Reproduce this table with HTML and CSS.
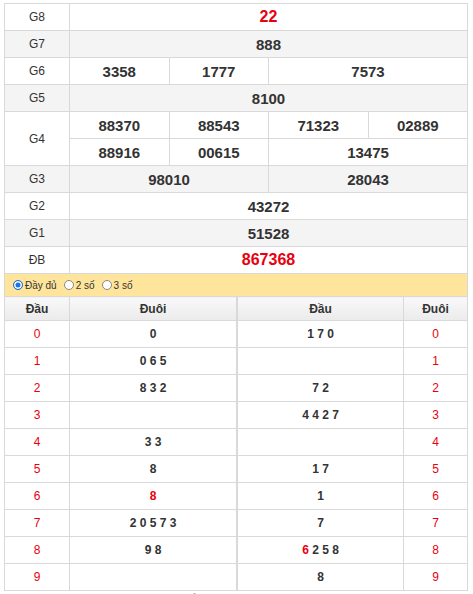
FILE: index.html
```html
<!DOCTYPE html>
<html lang="vi">
<head>
<meta charset="utf-8">
<link rel="stylesheet" href="styles.css">
</head>
<body>
<div class="wrap">
<table class="kq">
  <colgroup><col class="c-label"><col><col><col><col></colgroup>
  <tr><td class="lbl">G8</td><td colspan="4" class="num red">22</td></tr>
  <tr class="alt"><td class="lbl">G7</td><td colspan="4" class="num">888</td></tr>
  <tr><td class="lbl">G6</td><td class="num">3358</td><td class="num">1777</td><td colspan="2" class="num">7573</td></tr>
  <tr class="alt"><td class="lbl">G5</td><td colspan="4" class="num">8100</td></tr>
  <tr><td class="lbl" rowspan="2">G4</td><td class="num">88370</td><td class="num">88543</td><td class="num">71323</td><td class="num">02889</td></tr>
  <tr><td class="num">88916</td><td class="num">00615</td><td colspan="2" class="num">13475</td></tr>
  <tr class="alt"><td class="lbl">G3</td><td colspan="2" class="num">98010</td><td colspan="2" class="num">28043</td></tr>
  <tr><td class="lbl">G2</td><td colspan="4" class="num">43272</td></tr>
  <tr class="alt"><td class="lbl">G1</td><td colspan="4" class="num">51528</td></tr>
  <tr><td class="lbl">ĐB</td><td colspan="4" class="num red">867368</td></tr>
</table>
<div class="opts">
  <label class="opt"><span class="radio on"></span>Đầy đủ</label>
  <label class="opt"><span class="radio"></span>2 số</label>
  <label class="opt"><span class="radio"></span>3 số</label>
</div>
<div class="loto">
  <table class="lt left">
    <colgroup><col class="c-dau"><col></colgroup>
    <tr class="hd"><th>Đầu</th><th>Đuôi</th></tr>
    <tr><td class="r">0</td><td>0</td></tr>
    <tr><td class="r">1</td><td>0 6 5</td></tr>
    <tr><td class="r">2</td><td>8 3 2</td></tr>
    <tr><td class="r">3</td><td></td></tr>
    <tr><td class="r">4</td><td>3 3</td></tr>
    <tr><td class="r">5</td><td>8</td></tr>
    <tr><td class="r">6</td><td><span class="rb">8</span></td></tr>
    <tr><td class="r">7</td><td>2 0 5 7 3</td></tr>
    <tr><td class="r">8</td><td>9 8</td></tr>
    <tr><td class="r">9</td><td></td></tr>
  </table>
  <table class="lt right">
    <colgroup><col><col class="c-duoi"></colgroup>
    <tr class="hd"><th>Đầu</th><th>Đuôi</th></tr>
    <tr><td>1 7 0</td><td class="r">0</td></tr>
    <tr><td></td><td class="r">1</td></tr>
    <tr><td>7 2</td><td class="r">2</td></tr>
    <tr><td>4 4 2 7</td><td class="r">3</td></tr>
    <tr><td></td><td class="r">4</td></tr>
    <tr><td>1 7</td><td class="r">5</td></tr>
    <tr><td>1</td><td class="r">6</td></tr>
    <tr><td>7</td><td class="r">7</td></tr>
    <tr><td><span class="rb">6</span> 2 5 8</td><td class="r">8</td></tr>
    <tr><td>8</td><td class="r">9</td></tr>
  </table>
</div>
<p class="more">Xem thêm kết quả xổ số miền Bắc hôm nay, thống kê lô tô, cầu lô đẹp nhất</p>
</div>
</body>
</html>
```
FILE: styles.css
```css
html, body {
  margin: 0;
  padding: 0;
  background: #fff;
  font-family: "Liberation Sans", Arial, sans-serif;
  color: #333;
}
.wrap {
  padding: 3px 0 0 4px;
  width: 463px;
}
table {
  border-collapse: collapse;
  table-layout: fixed;
}
.kq {
  width: 464px;
}
.kq .c-label { width: 65px; }
.kq td {
  border: 1px solid #d9d9d9;
  height: 26px;
  padding: 0;
  text-align: center;
  vertical-align: middle;
}
.kq tr.alt td { background: #f4f4f4; }
.lbl {
  font-size: 12px;
  color: #333;
}
.num {
  font-size: 15px;
  font-weight: bold;
  color: #333;
}
.num.red { color: #e8000f; font-size: 16px; }
.opts {
  height: 22px;
  background: #fee59b;
  border-left: 1px solid #d9d9d9;
  border-right: 1px solid #d9d9d9;
  display: flex;
  align-items: center;
  padding-left: 8px;
  gap: 7px;
  font-size: 10px;
  color: #333;
  width: 454px;
}
.opt {
  display: flex;
  align-items: center;
  gap: 2px;
}
.radio {
  width: 8px;
  height: 8px;
  border-radius: 50%;
  border: 1px solid #888;
  background: #fff;
  display: inline-block;
  box-sizing: content-box;
}
.radio.on {
  background: #1a73e8;
  border-color: #1a73e8;
  box-shadow: inset 0 0 0 1.5px #fff;
}
.loto {
  display: flex;
  width: 464px;
}
.lt td, .lt th {
  border: 1px solid #d9d9d9;
  padding: 0;
  text-align: center;
  vertical-align: middle;
  font-size: 12px;
  font-weight: bold;
  color: #333;
}
.lt td { height: 26px; }
.lt .hd th {
  height: 23px;
  background: linear-gradient(#f9f9f9, #ebebeb);
}
.left { width: 233px; border-right: 1px solid #ccc; }
.left .c-dau { width: 65px; }
.right { width: 231px; }
.right .c-duoi { width: 64px; }
.lt td.r {
  color: #e8000f;
  font-weight: normal;
}
.rb { color: #e8000f; }
.more {
  margin: 1px 0 0 0;
  font-size: 13px;
  font-style: italic;
  line-height: 18px;
  color: #333;
}
```
